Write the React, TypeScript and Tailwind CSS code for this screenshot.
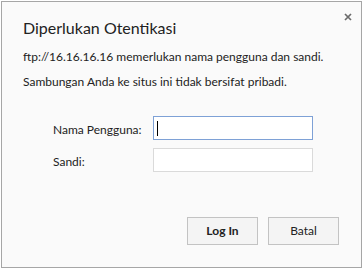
export default function App() {
  return (
    <div className="w-[363px] h-[269px] bg-white p-px" style={{ fontFamily: 'Lato, "Open Sans", sans-serif' }}>
      <div className="relative flex h-[267px] flex-col border border-[#a6a6a6] bg-[#fafafa] px-[21px] text-[#222]">
        <button className="absolute right-[8px] top-[10px] flex h-[10px] w-[10px] items-center justify-center">
          <svg width="8" height="8" viewBox="0 0 8 8">
            <path d="M1 1 L7 7 M7 1 L1 7" stroke="#6b6b6b" strokeWidth="1.7" />
          </svg>
        </button>
        <h1 className="whitespace-nowrap pt-[16px] text-[16px] leading-[20px]">Diperlukan Otentikasi</h1>
        <p className="mt-[11px] whitespace-nowrap text-[12px] leading-[16px]">ftp://16.16.16.16 memerlukan nama pengguna dan sandi.</p>
        <p className="mt-[9px] whitespace-nowrap text-[12px] leading-[16px]">Sambungan Anda ke situs ini tidak bersifat pribadi.</p>

        <div className="mt-[26px] grid grid-cols-[100px_160px] items-center gap-y-[8px] pl-[30px] text-[12px]">
          <label className="pt-[3px]">Nama Pengguna:</label>
          <div className="flex h-[24px] items-center border border-[#7ea1d6] bg-white px-[3px]">
            <span className="h-[15px] w-px bg-black" />
          </div>
          <label className="pt-[3px]">Sandi:</label>
          <div className="h-[24px] border border-[#dadada] bg-white" />
        </div>

        <div className="mt-auto mb-[22px] flex justify-end gap-[10px] pr-px">
          <button className="h-[28px] w-[71px] border border-[#c3c3c3] bg-[#f4f4f4] text-[12px] font-bold">Log In</button>
          <button className="h-[28px] w-[71px] border border-[#c3c3c3] bg-[#f4f4f4] text-[12px]">Batal</button>
        </div>
      </div>
    </div>
  );
}
